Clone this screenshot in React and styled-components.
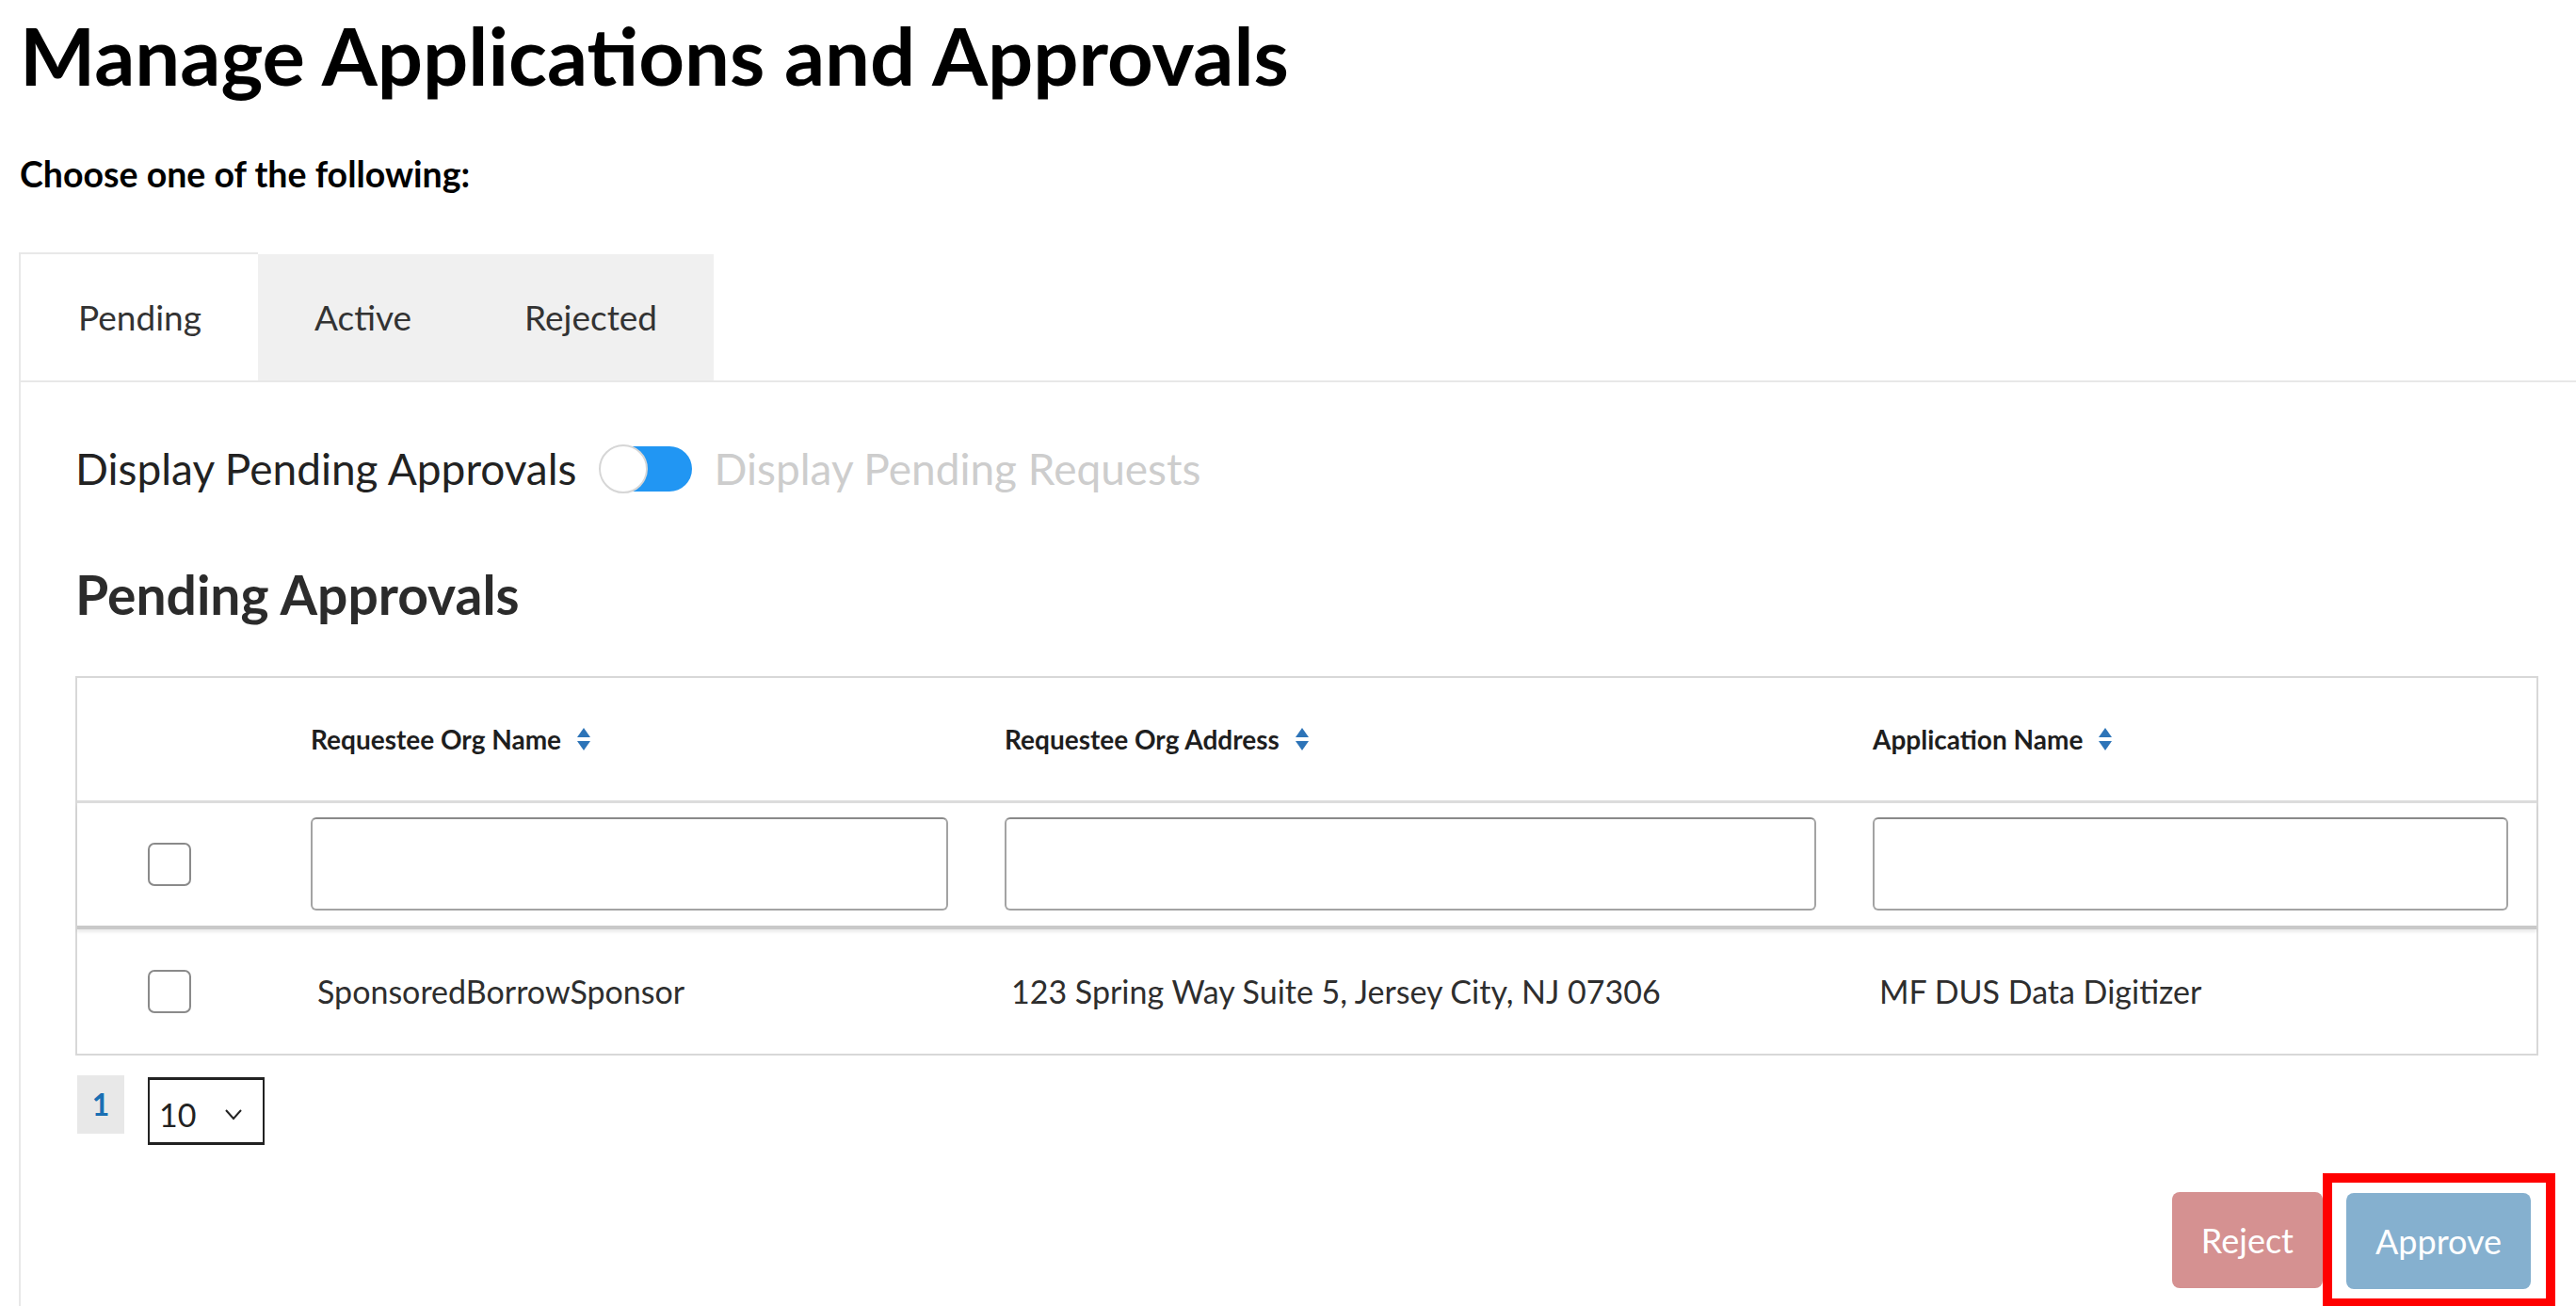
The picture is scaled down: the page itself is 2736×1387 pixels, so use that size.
import styled, { createGlobalStyle } from "styled-components";

const GlobalStyle = createGlobalStyle`
  html, body {
    margin: 0;
    padding: 0;
    background: #ffffff;
    font-family: Lato, "Open Sans", "Liberation Sans", sans-serif;
    color: #222;
  }
  * { box-sizing: border-box; }
`;

const Page = styled.div`
  padding: 16px 0 0 21px;
`;

const Title = styled.h1`
  margin: 0;
  font-size: 85px;
  line-height: 1;
  font-weight: 700;
  color: #000;
`;

const Lead = styled.p`
  margin: 65px 0 0 0;
  font-size: 37.5px;
  line-height: 1;
  font-weight: 700;
  color: #000;
`;

const TabList = styled.div`
  display: flex;
  margin-top: 64px;
  margin-left: -1px;
  border-bottom: 2px solid #e8e8e8;
`;

const Tab = styled.div`
  display: flex;
  align-items: center;
  height: ${(p) => (p.$active ? "136px" : "134px")};
  margin-top: ${(p) => (p.$active ? "0" : "2px")};
  margin-bottom: ${(p) => (p.$active ? "-2px" : "0")};
  padding: 0 60px 0 ${(p) => (p.$active ? "61px" : "60px")};
  font-size: 37px;
  color: #333;
  background: ${(p) => (p.$active ? "#ffffff" : "#f0f0f0")};
  border-top: ${(p) => (p.$active ? "2px solid #e8e8e8" : "none")};
  border-left: ${(p) => (p.$active ? "2px solid #e8e8e8" : "none")};
`;

const Panel = styled.div`
  margin-left: -1px;
  border-left: 2px solid #e8e8e8;
  padding: 67px 22px 0 58px;
`;

const ToggleRow = styled.div`
  display: flex;
  align-items: center;
  gap: 24px;
  height: 50px;
`;

const ToggleLabel = styled.span`
  font-size: 46px;
  line-height: 1;
  color: ${(p) => (p.$muted ? "#cdcdcd" : "#222")};
`;

const Switch = styled.div`
  position: relative;
  width: 98px;
  height: 48px;
  border-radius: 24px;
  background: #2196f3;
`;

const Knob = styled.span`
  position: absolute;
  left: -1px;
  top: -2px;
  width: 52px;
  height: 52px;
  border-radius: 50%;
  background: #ffffff;
  border: 2px solid #d6d6d6;
`;

const Heading = styled.h2`
  margin: 80px 0 0 0;
  font-size: 57px;
  line-height: 1;
  font-weight: 700;
  color: #2b2b2b;
`;

const Table = styled.div`
  margin: 58px 18px 0 0;
  border: 2px solid #d8d8d8;
`;

const Row = styled.div`
  display: grid;
  grid-template-columns: 218px 737px 922px 1fr;
  align-items: center;
  height: ${(p) => p.$h}px;
  border-bottom: ${(p) => p.$line || "none"};
  box-shadow: ${(p) => p.$shadow || "none"};
`;

const HeadCell = styled.div`
  display: flex;
  align-items: center;
  gap: 16px;
  padding-left: 30px;
  font-size: 28px;
  font-weight: 700;
  color: #1e1e1e;
`;

const FilterCell = styled.div`
  padding: 0 30px;
`;

const FilterInput = styled.input`
  display: block;
  width: 100%;
  height: 99px;
  border: 2px solid #a3a3a3;
  border-top-color: #8a8a8a;
  border-radius: 6px;
  background: #fff;
`;

const BoxCell = styled.div`
  padding-left: 75px;
`;

const Check = styled.span`
  display: block;
  width: 46px;
  height: 46px;
  border: 2px solid #8a8a8a;
  border-radius: 7px;
  background: #fff;
`;

const DataCell = styled.div`
  padding-left: 37px;
  font-size: 34px;
  color: #2e2e2e;
`;

const Pager = styled.div`
  display: flex;
  align-items: flex-start;
  gap: 25px;
  margin-top: 21px;
  padding-left: 2px;
`;

const PageNum = styled.span`
  display: flex;
  align-items: center;
  justify-content: center;
  width: 50px;
  height: 62px;
  background: #e8e8e8;
  color: #1a6fb3;
  font-size: 32px;
  font-weight: 700;
`;

const SizeSelect = styled.div`
  display: flex;
  align-items: center;
  justify-content: space-between;
  width: 124px;
  height: 72px;
  margin-top: 2px;
  padding: 8px 22px 0 10px;
  border: 2px solid #222;
  border-width: 3px 2px 3px 2px;
  font-size: 34px;
  color: #222;
`;

const Actions = styled.div`
  display: flex;
  align-items: center;
  justify-content: flex-end;
  margin-top: 30px;
`;

const Button = styled.button`
  height: 102px;
  padding: 0 31px;
  border: none;
  border-radius: 8px;
  font-family: Lato, "Open Sans", sans-serif;
  font-size: 36px;
  color: #ffffff;
  background: ${(p) => p.$bg};
`;

const Highlight = styled.div`
  display: flex;
  padding: 11px 16px 10px 15px;
  border: 10px solid #ff0000;
`;

const SortIcon = () => (
  <svg width="16" height="28" viewBox="0 0 16 28">
    <polygon points="1,12 8,2 15,12" fill="#2d74b8" />
    <polygon points="1,16 8,26 15,16" fill="#2d74b8" />
  </svg>
);

const Chevron = () => (
  <svg width="18" height="12" viewBox="0 0 18 12">
    <polyline points="1,1 9,10 17,1" fill="none" stroke="#222" strokeWidth="2" />
  </svg>
);

const columns = ["Requestee Org Name", "Requestee Org Address", "Application Name"];
const rows = [
  ["SponsoredBorrowSponsor", "123 Spring Way Suite 5, Jersey City, NJ 07306", "MF DUS Data Digitizer"],
];

export default function App() {
  return (
    <Page>
      <GlobalStyle />
      <Title>Manage Applications and Approvals</Title>
      <Lead>Choose one of the following:</Lead>
      <TabList>
        <Tab $active>Pending</Tab>
        <Tab>Active</Tab>
        <Tab>Rejected</Tab>
      </TabList>
      <Panel>
        <ToggleRow>
          <ToggleLabel>Display Pending Approvals</ToggleLabel>
          <Switch>
            <Knob />
          </Switch>
          <ToggleLabel $muted>Display Pending Requests</ToggleLabel>
        </ToggleRow>
        <Heading>Pending Approvals</Heading>
        <Table>
          <Row $h={133} $line="3px solid #dcdcdc">
            <div />
            {columns.map((c) => (
              <HeadCell key={c}>
                {c}
                <SortIcon />
              </HeadCell>
            ))}
          </Row>
          <Row $h={134} $line="4px solid #c9c9c9" $shadow="0 3px 3px rgba(0,0,0,0.08)">
            <BoxCell>
              <Check />
            </BoxCell>
            {columns.map((c) => (
              <FilterCell key={c}>
                <FilterInput aria-label={c} />
              </FilterCell>
            ))}
          </Row>
          {rows.map((r) => (
            <Row key={r[0]} $h={132}>
              <BoxCell>
                <Check />
              </BoxCell>
              {r.map((v) => (
                <DataCell key={v}>{v}</DataCell>
              ))}
            </Row>
          ))}
        </Table>
        <Pager>
          <PageNum>1</PageNum>
          <SizeSelect>
            <span>10</span>
            <Chevron />
          </SizeSelect>
        </Pager>
        <Actions>
          <Button $bg="#d59191">Reject</Button>
          <Highlight>
            <Button $bg="#85b0cf">Approve</Button>
          </Highlight>
        </Actions>
      </Panel>
    </Page>
  );
}
